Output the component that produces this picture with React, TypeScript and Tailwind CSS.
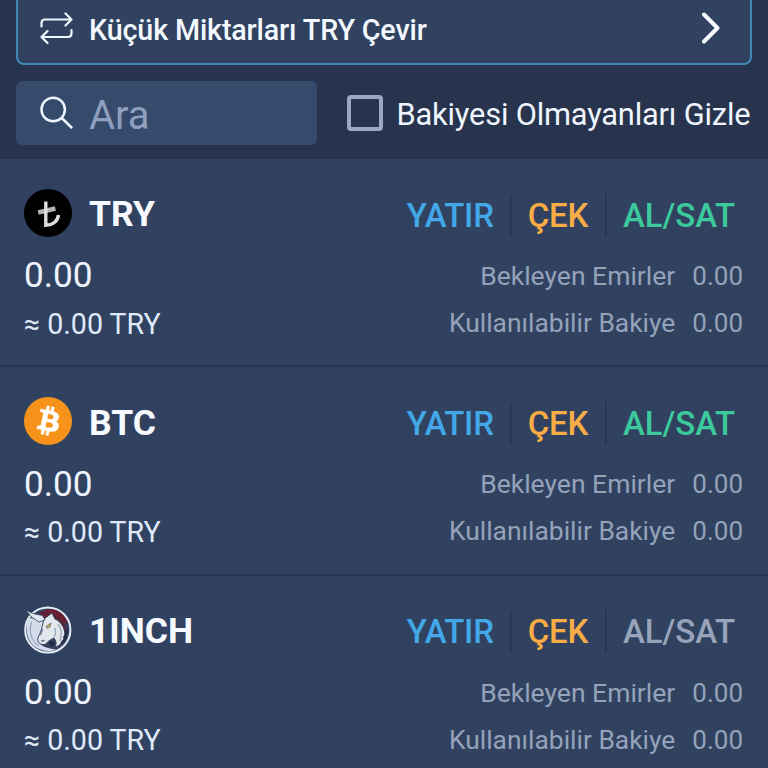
import React, { useState } from 'react';
import clsx from 'clsx';

interface Asset {
  symbol: string;
  icon: React.ReactNode;
  tradable: boolean;
}

const TryIcon = () => (
  <svg viewBox="0 0 48 48" className="w-12 h-12">
    <circle cx="24" cy="24" r="24" fill="#000" />
    <g fill="none">
      <path d="M14.2 23.4L31.4 19.4" strokeWidth="4.6" stroke="#b4b4b4" />
      <path d="M21.8 12.4V36.2C28.5 36.2 33.8 32.4 34.4 26" strokeWidth="3.4" stroke="#dedede" />
    </g>
  </svg>
);

const BtcIcon = () => (
  <svg viewBox="0 0 32 32" className="w-12 h-12">
    <circle cx="16" cy="16" r="16" fill="#f7931a" />
    <path
      fill="#fff"
      stroke="#fff"
      strokeWidth=".3"
      transform="rotate(-2 16 16) translate(.1 -.2)"
      d="M23.189 14.02c.314-2.096-1.283-3.223-3.465-3.975l.708-2.84-1.728-.43-.69 2.765c-.454-.114-.92-.22-1.385-.326l.695-2.783L15.596 6l-.708 2.839c-.376-.086-.746-.17-1.104-.26l.002-.009-2.384-.595-.46 1.846s1.283.294 1.256.312c.7.175.826.638.805 1.006l-.806 3.235c.048.012.11.03.18.057l-.183-.045-1.13 4.532c-.086.212-.303.531-.793.41.018.025-1.256-.313-1.256-.313l-.858 1.978 2.25.561c.418.105.828.215 1.231.318l-.715 2.872 1.727.43.708-2.84c.472.127.93.245 1.378.357l-.706 2.828 1.728.43.715-2.866c2.948.558 5.164.333 6.097-2.333.752-2.146-.037-3.385-1.588-4.192 1.13-.26 1.98-1.003 2.207-2.538zm-3.95 5.538c-.533 2.147-4.148.986-5.32.695l.95-3.805c1.172.293 4.929.872 4.37 3.11zm.535-5.569c-.487 1.953-3.495.96-4.47.717l.86-3.45c.975.243 4.118.696 3.61 2.733z"
    />
  </svg>
);

const OneInchIcon = () => (
  <svg viewBox="0 0 48 48" className="w-12 h-12">
    <circle cx="23.8" cy="24" r="22.6" fill="#34415f" stroke="#e6edf6" strokeWidth="2" />
    {/* left crescent */}
    <path d="M4 12C1 22 2.5 34 10.5 40.5C17 45 25 46.5 32 43.5C22 42.5 15.5 39.5 14 34L18 24L21 13Z" fill="#d3dcea" />
    <path d="M7.5 16C5 25 7 34 14.5 40" fill="none" stroke="#98a6be" strokeWidth="1.2" />
    {/* mane */}
    <path d="M14 10C17 3 28 1.5 34 5C40 8 43 14 44 20C42 17 40 16 38 16C42 20 43 26 41 31C40 26 37 20 32 16C27 12 20 11 15 13Z" fill="#6b2031" />
    <path d="M17 7C25 7 33 9 38 17" fill="none" stroke="#33253c" strokeWidth="1.2" />
    {/* head and neck */}
    <path d="M20 13L28 7L31 13C38 16 41 23 41 30C39 36 36 40 31 41C33 37 32 35 30 32C26 34 24 35 22 38C18 39.5 14 38 13.5 33C15 29 17 26 18 21Z" fill="#e2e6ed" stroke="#2b3955" strokeWidth=".9" />
    <path d="M34 18C38 23 38 29 36 35M30 31C32 28 32 25 30.5 22" fill="none" stroke="#98a3b8" strokeWidth="1.3" />
    <path d="M17 35L21 34.5M18.5 23L16.5 29" fill="none" stroke="#6d7b96" strokeWidth="1.6" />
    <path d="M1.8 4L9 7.5L18.5 9.5L21 14L15 16L8 11.5Z" fill="#e0e7f1" stroke="#33405c" strokeWidth=".8" />
    <path d="M22 20.5L27 17L26 21L23 22.3Z" fill="#c2b052" stroke="#4a5060" strokeWidth=".6" />
    <path d="M25 37C28 34 31.5 36 29.5 40.5C27.5 40.5 25.5 39.5 25 37Z" fill="#202b47" />
    <path d="M39.5 32C42 29 42.5 26 42.5 23M37 37.5L42 31" fill="none" stroke="#202b47" strokeWidth="1.8" />
  </svg>
);

const assets: Asset[] = [
  { symbol: 'TRY', icon: <TryIcon />, tradable: true },
  { symbol: 'BTC', icon: <BtcIcon />, tradable: true },
  { symbol: '1INCH', icon: <OneInchIcon />, tradable: false }
];

const AssetRow: React.FC<{ asset: Asset }> = ({ asset }) => (
  <div className="h-[208.4px] pl-6 pr-[25px] pt-[30px] border-b-2 border-[#26364f] bg-[#304260]">
    <div className="h-12 flex items-center justify-between">
      <div className="flex items-center gap-[17px]">
        {asset.icon}
        <span className="text-[35.5px] font-bold text-[#f6faff] mt-1">{asset.symbol}</span>
      </div>
      <div className="flex items-center mr-[8px] mt-1 text-[33px] font-medium">
        <button className="text-[#42a8e8] tracking-[-0.3px]">YATIR</button>
        <span className="w-[2px] h-[43px] mx-4 bg-[#283752]" />
        <button className="text-[#f9ab45] tracking-[-0.2px]">ÇEK</button>
        <span className="w-[2px] h-[43px] ml-[17px] mr-4 bg-[#283752]" />
        <button className={clsx('tracking-[-0.1px]', asset.tradable ? 'text-[#3cc99c]' : 'text-[#98a4bb]')}>AL/SAT</button>
      </div>
    </div>
    <div className="h-12 mt-[15px] flex items-center justify-between">
      <span className="text-[35.2px] text-[#edf4ff]">0.00</span>
      <div className="flex items-baseline gap-[17px] text-[26px] text-[#95a2b9]">
        <span className="text-[26.5px]">Bekleyen Emirler</span>
        <span>0.00</span>
      </div>
    </div>
    <div className="h-12 flex items-center justify-between">
      <span className="text-[28.6px] text-[#dfe9fa]">≈ 0.00 TRY</span>
      <div className="flex items-baseline gap-[17px] -mt-[2px] text-[26px] text-[#95a2b9]">
        <span className="text-[26.4px]">Kullanılabilir Bakiye</span>
        <span>0.00</span>
      </div>
    </div>
  </div>
);

export default function App() {
  const [hideEmpty, setHideEmpty] = useState(false);
  const [query, setQuery] = useState('');

  return (
    <div className="w-[768px] h-[768px] overflow-hidden bg-[#28344d] font-['Roboto',sans-serif] leading-none whitespace-nowrap">
      <div className="h-[159px] px-4">
        <button className="w-full h-[65px] flex items-center pl-[22px] pr-[30px] pb-[5px] rounded-b-lg border-2 border-t-0 border-[#4187b2] bg-[#304260]">
          <svg viewBox="0 0 34 34" className="w-[34px] h-[34px]" fill="none" stroke="#eef5ff" strokeWidth="2.2" strokeLinecap="round" strokeLinejoin="round">
            <path d="M1.5 14.5V11Q1.5 7.5 5 7.5H31.5M25.5 1.5L31.5 7.5L25.5 13.5" />
            <path d="M31.5 18V21.5Q31.5 25 28 25H1.5M7.5 19L1.5 25L7.5 31" />
          </svg>
          <span className="ml-[15px] mt-[2px] text-[28.7px] tracking-[-0.14px] font-medium text-[#f3f8ff]">Küçük Miktarları TRY Çevir</span>
          <svg viewBox="0 0 18 32" className="ml-auto -mt-[2px] w-[18px] h-8" fill="none" stroke="#f6faff" strokeWidth="4" strokeLinecap="round" strokeLinejoin="round">
            <path d="M2 2.5L15.5 16L2 29.5" />
          </svg>
        </button>

        <div className="flex items-center mt-4">
          <label className="w-[300.5px] h-16 flex items-center pl-6 rounded-md bg-[#364a6c]">
            <svg viewBox="0 0 34 34" className="w-[34px] h-[34px] shrink-0" fill="none" stroke="#eef5ff" strokeWidth="2.5" strokeLinecap="round">
              <circle cx="13.2" cy="13.5" r="11.7" />
              <path d="M21.8 22L31.5 31.5" />
            </svg>
            <input
              className="ml-[15px] mt-[5px] w-[200px] h-12 outline-none text-[40px] text-[#edf4ff] placeholder:text-[#8f9fbe]"
              placeholder="Ara"
              value={query}
              onChange={e => setQuery(e.target.value)}
            />
          </label>
          <label className="flex items-center ml-[30px]">
            <input
              type="checkbox"
              className="appearance-none w-9 h-9 rounded border-4 border-[#9aa8c3] checked:bg-[#42a8e8]"
              checked={hideEmpty}
              onChange={e => setHideEmpty(e.target.checked)}
            />
            <span className="ml-[14px] mt-[5px] text-[30.8px] tracking-[-0.18px] text-[#f0f6ff]">Bakiyesi Olmayanları Gizle</span>
          </label>
        </div>
      </div>

      {assets.map(a => (
        <AssetRow key={a.symbol} asset={a} />
      ))}
    </div>
  );
}
